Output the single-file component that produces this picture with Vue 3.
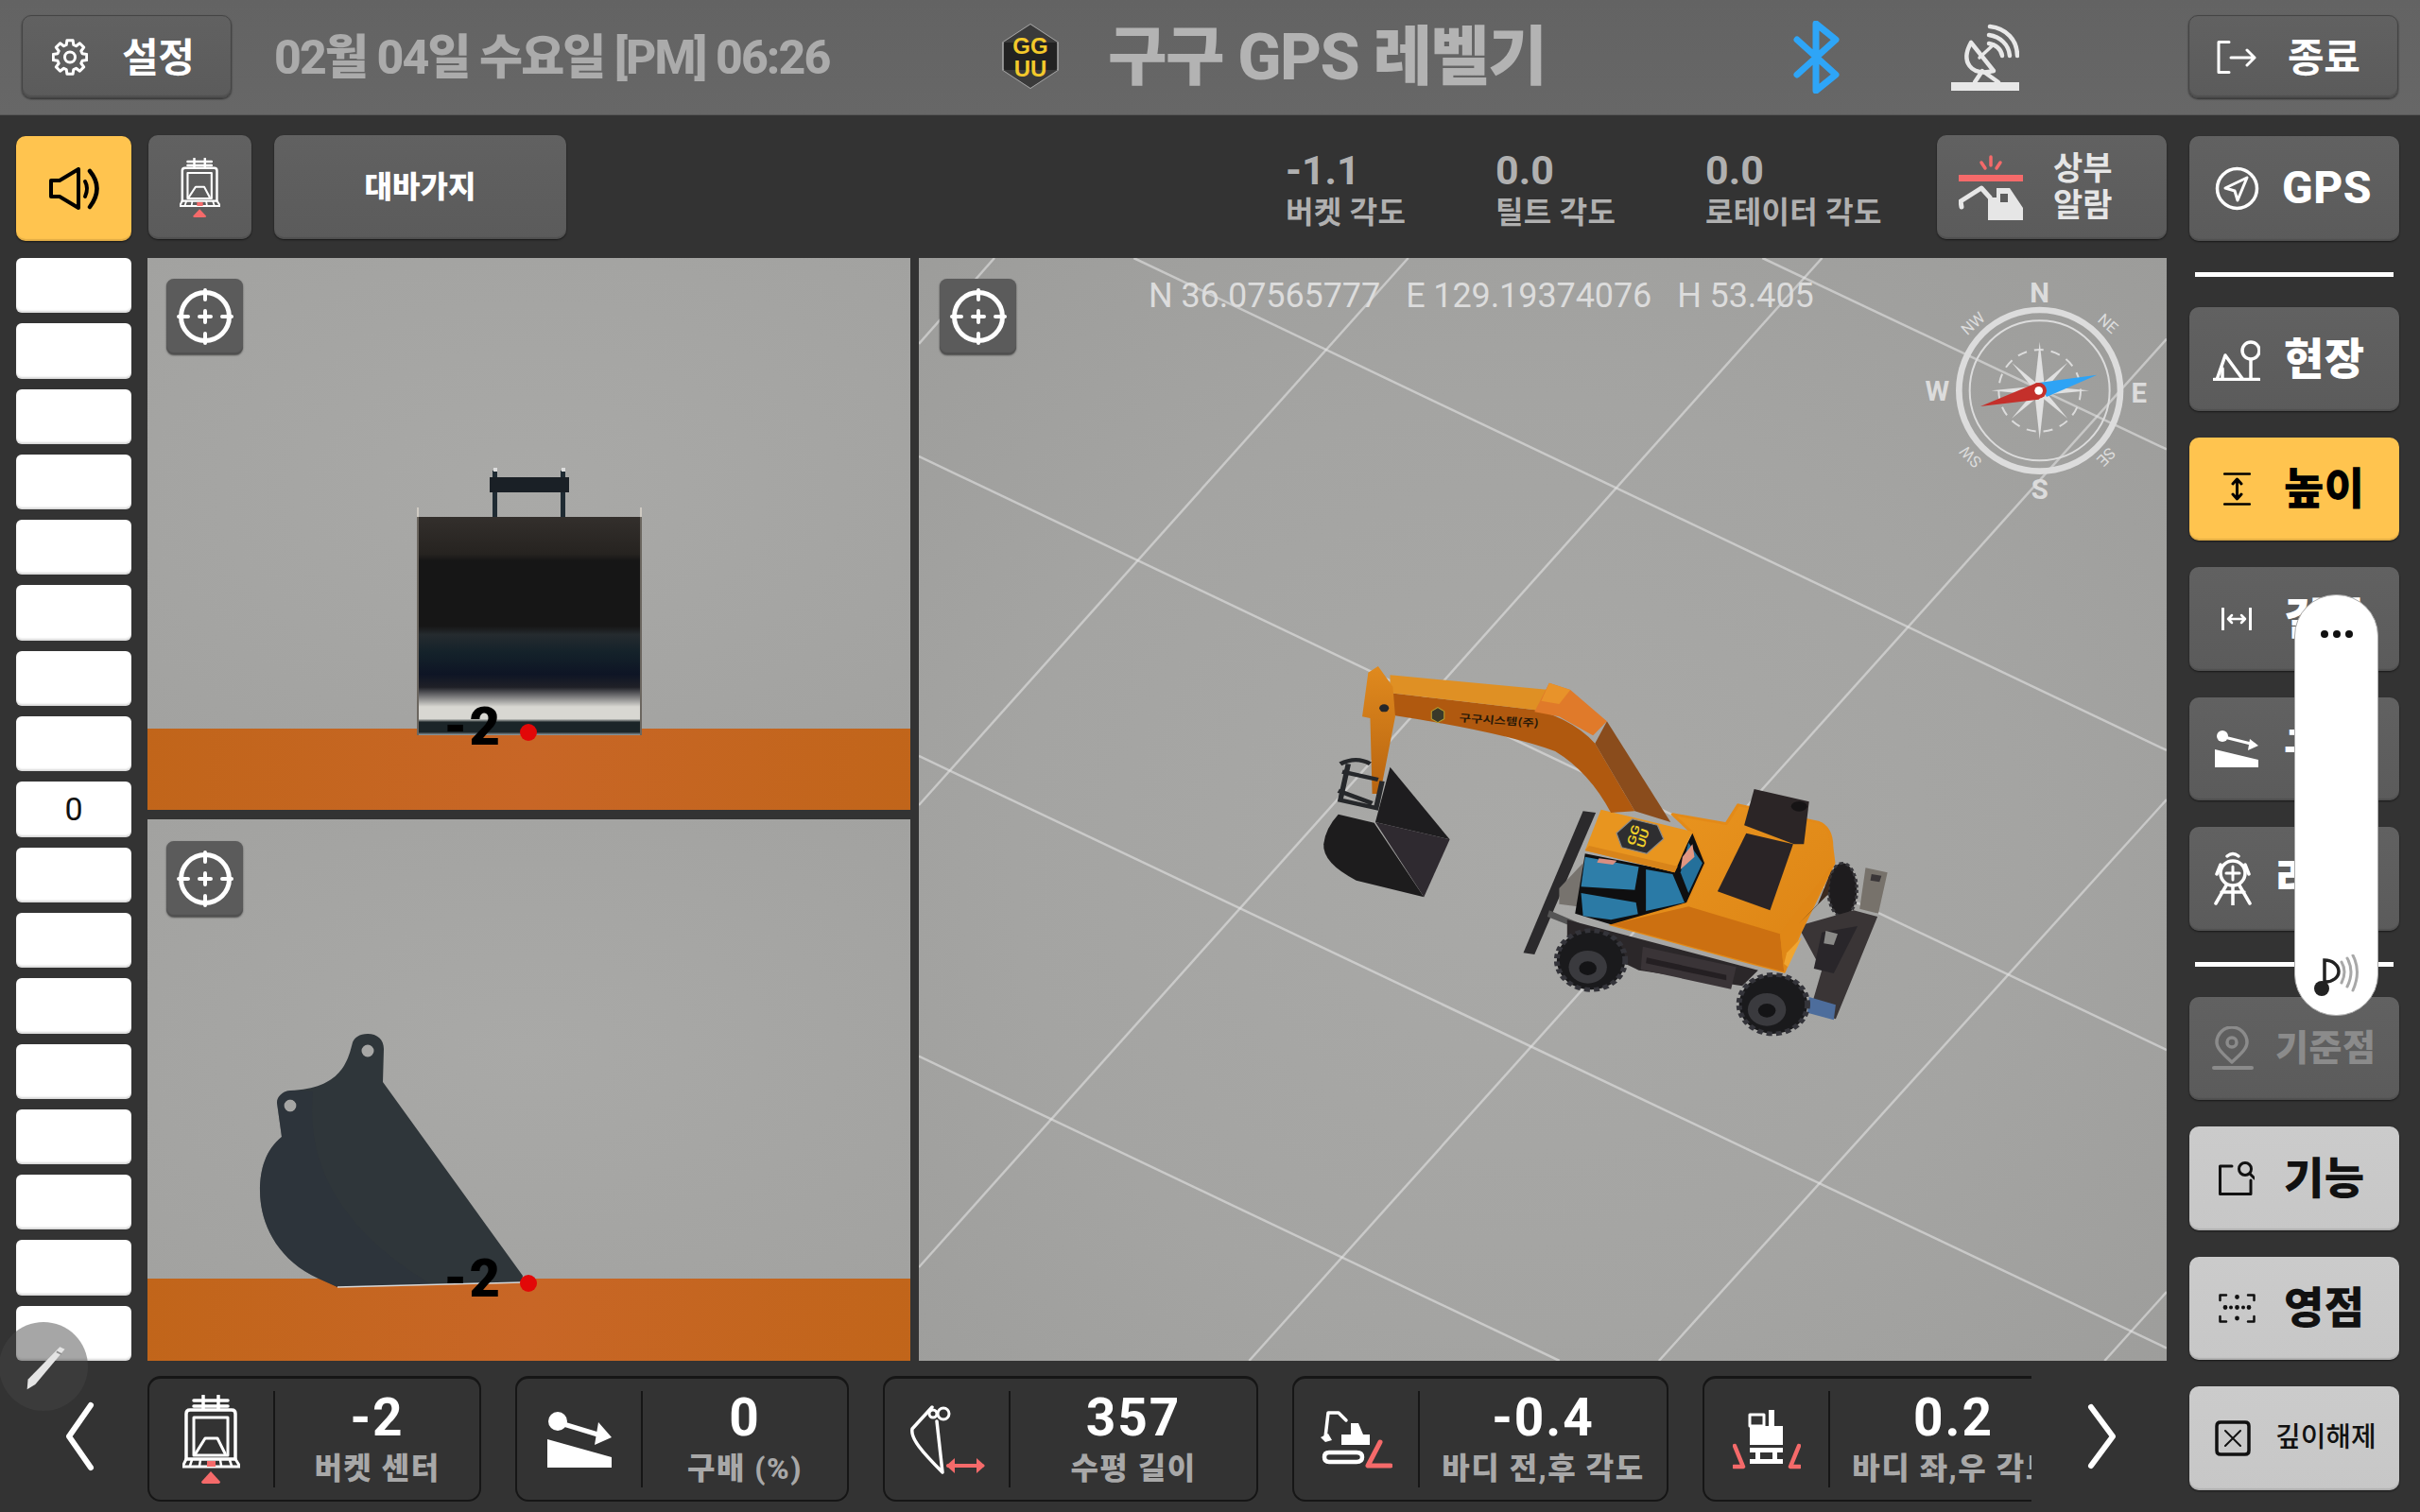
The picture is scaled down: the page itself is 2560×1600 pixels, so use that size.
<script setup>
import { h } from 'vue'

const RED = '#f56a6a'
const S = (d, w = 3, color = 'currentColor') => ({
  d, stroke: color, 'stroke-width': w, fill: 'none', 'stroke-linecap': 'round', 'stroke-linejoin': 'round'
})
const F = (d, fill = 'currentColor') => ({ d, fill })
const C = (x, y, r) => `M${x - r},${y}a${r},${r} 0 1,0 ${2 * r},0a${r},${r} 0 1,0 ${-2 * r},0Z`

function gearPath(cx, cy, R, r, n) {
  let d = ''
  for (let i = 0; i < n; i++) {
    const step = (Math.PI * 2) / n
    const a = i * step - Math.PI / 2
    const pt = (ang, rad) => `${(cx + Math.cos(ang) * rad).toFixed(1)},${(cy + Math.sin(ang) * rad).toFixed(1)}`
    d += (i ? 'L' : 'M') + pt(a - step * 0.22, R) + 'L' + pt(a + step * 0.22, R) + 'L' + pt(a + step * 0.36, r) + 'L' + pt(a + step * 0.64, r)
  }
  return d + 'Z'
}

const bucket = [
  S('M22,1V15M38,1V15', 3.5),
  S('M12,6H48M12,12H48', 3.5),
  S('M8,16H52Q56,16 56,20V68H4V20Q4,16 8,16Z', 3.5),
  S('M12,24H48V64H12Z', 3),
  S('M14,62L24,46H37L45,62', 3),
  S('M4,68L0,76H61L56,68', 3),
  S('M10,69L8,75M19,69L18,75M40,69L41,75M50,69L52,75', 2.5),
  F('M26,70H35V76H26Z', RED),
  F('M30,81L40,92Q40,94 37,94H23Q20,94 20,92Z', RED)
]

const icons = {
  gear: { w: 38, h: 39, p: [S(gearPath(19, 19.5, 18, 13.5, 8), 3), S(C(19, 19.5, 5.5), 3)] },
  exit: { w: 42, h: 35, p: [S('M13,1.5H2V33.5H13', 3), S('M15,18H40M32,10L40,18L32,26', 3)] },
  bt: { w: 55, h: 77, p: [S('M7,20L48,57L27,74V3L48,20L7,57', 7)] },
  dish: {
    w: 72, h: 71,
    p: [
      F('M0,62H72V71H0Z'),
      S('M21,20C10,40 20,56 45,50Z', 4.5),
      S('M41,3C58,5 70,17 70,34', 4.5),
      S('M40,12C52,14 61,22 62,34', 4.5),
      S('M40,21C47,22 53,27 54,34', 4.5),
      S('M30,36L45,22', 3.5),
      S('M33,50L25,62M36,52L50,62', 4.5)
    ]
  },
  speaker: { w: 53, h: 45, p: [S('M2,14H11L31,2V43L11,31H2Z', 4), S('M38,15Q42,22 38,31', 4), S('M43,4Q58,22 43,42', 4.5)] },
  bucket: { w: 61, h: 94, p: bucket },
  alarm: {
    w: 68, h: 69,
    p: [
      F('M0,21H68V28H0Z', RED),
      S('M34,2V11M24,8L28,14M44,8L40,14', 3.5, RED),
      S('M3,55L2,49L24,35L33,45', 5),
      F('M31,69V45H40V35H54L68,56V69Z'),
      F('M44,41H52V50H44Z', '#5c5c5c')
    ]
  },
  gps: { w: 47, h: 47, p: [S(C(23.5, 23.5, 21), 3.5), S('M34,12L11,23L21,26L24,36Z', 3)] },
  site: { w: 50, h: 46, p: [S('M1,44.5H49', 3.5), S('M4,45L13,19L32,45', 3.5), S('M10,33V45', 3.5), S(C(40, 14, 9), 3.5), S('M40,24V45', 3.5)] },
  height: { w: 29, h: 35, p: [S('M1,1.5H28M1,33.5H28', 2.5), S('M14.5,8V27M10,12L14.5,7L19,12M10,23L14.5,28L19,23', 3)] },
  length: { w: 32, h: 24, p: [S('M1.5,1V23M30.5,1V23', 3), S('M7,12H25M11,8L7,12L11,16M21,8L25,12L21,16', 2.5)] },
  slope: { w: 46, h: 39, p: [F(C(8, 6, 6)), S('M10,7L42,15', 3), F('M37,9L46,16L35,21Z'), F('M0,20L46,31V39H0Z')] },
  radar: {
    w: 40, h: 57,
    p: [
      S(C(20, 23, 13), 3.5), S('M20,16V30M13,23H27', 3), S('M14,5Q20,0 26,5M7,14L3,24M33,14L37,24', 3.5),
      S('M13,36L2,55M27,36L38,55M20,37V57M8,43H32', 3.5)
    ]
  },
  pin: { w: 44, h: 46, p: [S('M21,38C10,28 5,23 5,17A16,16 0 0,1 37,17C37,23 32,28 21,38Z', 3.5), S(C(21, 17, 5), 3.5), S('M2,44H42', 4)] },
  func: { w: 38, h: 36, p: [S('M14,5H1.5V34.5H34V20', 3), S(C(28, 8, 6.5), 3), S('M33,13L38,18', 3)] },
  zero: {
    w: 39, h: 31,
    p: [
      S('M1.5,7V1.5H8M31,1.5H37.5V7M37.5,24V29.5H31M8,29.5H1.5V24', 2.5),
      F(C(19.5, 3.5, 2.4) + C(7, 14.5, 2.4) + C(13, 14.5, 2) + C(19.5, 14.5, 2.4) + C(26, 14.5, 2) + C(32, 14.5, 2.4) + C(19.5, 26, 2.4))
    ]
  },
  clear: { w: 38, h: 38, p: [S('M6,2H32Q36,2 36,6V32Q36,36 32,36H6Q2,36 2,32V6Q2,2 6,2Z', 3.5), S('M11,11L27,27M27,11L11,27', 2)] },
  hlen: {
    w: 82, h: 74,
    p: [
      S('M25,3L4,26C2,36 14,50 36,72L30,18', 3.5),
      S(C(37, 10, 6) + C(26, 10, 4), 3),
      S('M42,65H78', 4, RED),
      F('M40,65L49,57V73ZM81,65L72,57V73Z', RED)
    ]
  },
  slopeBig: { w: 68, h: 59, p: [F(C(11, 10, 10)), S('M14,12L60,26', 5), F('M54,11L68,27L50,35Z'), F('M0,29L68,48V59H0Z')] },
  pitch: {
    w: 76, h: 61,
    p: [
      S('M5,28L8,2L19,2L27,10', 3.5), F('M0,28L8,24L12,31L5,33Z'),
      F('M22,25H32V13H40L45,25H52V36H22Z'),
      S('M9,44H38Q44,44 44,49Q44,54 38,54H9Q4,54 4,49Q4,44 9,44Z', 4.5),
      S('M63,33L50,58H74', 5, RED)
    ]
  },
  roll: {
    w: 72, h: 63,
    p: [
      S('M18,5H33V17H18Z', 3), F('M38,0H44V17H38Z'), F('M18,17H53V37H18Z'),
      F('M18,40H53V45H18ZM24,45H29V52H24ZM42,45H47V52H42ZM18,52H53V57H18Z'),
      S('M2,38L11,60H1', 4.5, RED), S('M70,38L61,60H71', 4.5, RED)
    ]
  }
}

const Ic = (props) => {
  const i = icons[props.name]
  return h('svg', {
    viewBox: `0 0 ${i.w} ${i.h}`,
    width: props.w || i.w,
    height: props.h || i.h,
    preserveAspectRatio: 'none'
  }, i.p.map((p) => h('path', p)))
}
Ic.props = ['name', 'w', 'h']

const Crosshair = () => h('svg', { viewBox: '0 0 60 60', width: 60, height: 60 }, [
  h('path', S(C(30, 30, 25.5), 5)),
  h('path', S('M30,2V12M30,48V58M2,30H12M48,30H58', 4)),
  h('path', S('M30,24V36M24,30H36', 4))
])

const stats = [
  { v: '-1.1', l: '버켓 각도' },
  { v: '0.0', l: '틸트 각도' },
  { v: '0.0', l: '로테이터 각도' }
]
const strip = Array.from({ length: 17 }, (_, i) => (i === 8 ? '0' : ''))

const navTop = [
  { t: '현장', i: 'site' },
  { t: '높이', i: 'height', active: true },
  { t: '길이', i: 'length' },
  { t: '구배', i: 'slope' },
  { t: '라인', i: 'radar', tight: true }
]
const navBottom = [
  { t: '기준점', i: 'pin', off: true, tight: true },
  { t: '기능', i: 'func', light: true },
  { t: '영점', i: 'zero', light: true },
  { t: '깊이해제', i: 'clear', light: true, small: true, tight: true }
]
const cards = [
  { i: 'bucket', v: '-2', l: '버켓 센터', w: 353 },
  { i: 'slopeBig', v: '0', l: '구배 (%)', w: 353 },
  { i: 'hlen', v: '357', l: '수평 길이', w: 397 },
  { i: 'pitch', v: '-0.4', l: '바디 전,후 각도', w: 398 },
  { i: 'roll', v: '0.2', l: '바디 좌,우 각도', w: 398 }
]
const gridLines = [
  'M270,0L1568,700', 'M0,282L1568,1126', 'M0,708L1568,1550', 'M0,1135L805,1568', 'M1060,0L1568,272',
  'M95,0L0,122', 'M615,0L0,778', 'M1135,0L0,1435', 'M1568,115L415,1568', 'M1568,770L930,1568', 'M1568,1470L1490,1568'
]
</script>

<template>
  <div class="app">
    <header class="top">
      <button class="btn head-btn">
        <Ic name="gear" />
        <span>설정</span>
      </button>
      <div class="date">02월 04일 수요일 [PM] 06:26</div>
      <svg class="logo" viewBox="0 0 60 69" width="60" height="69">
        <path d="M30,1L59,20V49L30,68L1,49V20Z" fill="#222" stroke="#aaa" stroke-width="1.5" />
        <path d="M30,1L59,20H1Z" fill="#3a3a3a" />
        <path d="M1,49H59L30,68Z" fill="#3a3a3a" />
        <text class="logo-t" x="30" y="32">GG</text>
        <text class="logo-t" x="30" y="56">UU</text>
      </svg>
      <div class="title">구구 GPS 레벨기</div>
      <Ic name="bt" class="bt" />
      <Ic name="dish" class="dish" />
      <button class="btn head-btn exit">
        <Ic name="exit" />
        <span>종료</span>
      </button>
    </header>

    <div class="main">
      <div class="content">
        <div class="toolbar">
          <button class="btn sound"><Ic name="speaker" /></button>
          <button class="btn bucket-btn"><Ic name="bucket" :w="43" :h="63" /></button>
          <button class="btn type-btn">대바가지</button>
          <div class="stats">
            <div v-for="s in stats" :key="s.l" class="stat">
              <div class="stat-v">{{ s.v }}</div>
              <div class="stat-l">{{ s.l }}</div>
            </div>
          </div>
          <button class="btn alarm-btn">
            <Ic name="alarm" />
            <span>상부<br />알람</span>
          </button>
        </div>

        <div class="mid">
          <div class="strip">
            <div v-for="(s, i) in strip" :key="i" class="cell">{{ s }}</div>
          </div>
          <div class="views">
            <div class="view front">
              <div class="sky"></div>
              <div class="ground g1"></div>
              <svg class="layer" viewBox="0 0 807 584">
                <defs>
                  <linearGradient id="bk" x1="0" y1="0" x2="0" y2="1">
                    <stop offset="0" stop-color="#332f2c" />
                    <stop offset="0.17" stop-color="#262320" />
                    <stop offset="0.2" stop-color="#161616" />
                    <stop offset="0.5" stop-color="#161616" />
                    <stop offset="0.54" stop-color="#252b2f" />
                    <stop offset="0.62" stop-color="#14222a" />
                    <stop offset="0.72" stop-color="#0e1525" />
                    <stop offset="0.78" stop-color="#1f2027" />
                    <stop offset="0.87" stop-color="#d8d7d2" />
                    <stop offset="0.925" stop-color="#d8d7d2" />
                    <stop offset="0.94" stop-color="#1b2528" />
                    <stop offset="0.985" stop-color="#1b2528" />
                    <stop offset="1" stop-color="#9aa3a6" />
                  </linearGradient>
                </defs>
                <path d="M365,274V225H370V274ZM437,274V225H442V274Z" fill="#1f2b33" />
                <path d="M366,222H370V226H366ZM438,222H442V226H438Z" fill="#ddd" />
                <path d="M362,232H446V248H362Z" fill="#1a2026" />
                <path d="M285,274H522V505H285Z" fill="url(#bk)" />
                <path d="M285,274H287V505H285ZM521,274H523V505H521Z" fill="#6b665f" />
                <path d="M285,264H287V274H285ZM521,264H523V274H521Z" fill="#cfcac2" />
                <circle cx="403" cy="502" r="9" fill="#e20808" />
                <text class="mark" x="375" y="515">-2</text>
              </svg>
              <button class="btn cross"><Crosshair /></button>
            </div>

            <div class="view geo">
              <svg class="layer grid" viewBox="0 0 1568 1568" preserveAspectRatio="none">
                <path v-for="(d, i) in gridLines" :key="i" :d="d" stroke="#e6e6e6" stroke-opacity="0.58" stroke-width="2.5" vector-effect="non-scaling-stroke" />
              </svg>

              <svg class="excavator" viewBox="0 0 1568 1320" preserveAspectRatio="none">
                <defs>
                  <linearGradient id="bd" x1="0" y1="0" x2="1" y2="1">
                    <stop offset="0" stop-color="#ea9620" />
                    <stop offset="1" stop-color="#dc8314" />
                  </linearGradient>
                  <linearGradient id="stk" x1="0" y1="0" x2="0" y2="1">
                    <stop offset="0" stop-color="#e08a1e" />
                    <stop offset="1" stop-color="#b86410" />
                  </linearGradient>
                </defs>
                <!-- rear wheel and blade -->
                <ellipse cx="1352" cy="785" rx="36" ry="85" fill="#1e1c1e" stroke="#37363a" stroke-width="8" stroke-dasharray="10 8" />
                <path d="M1410,715L1465,730L1442,860L1395,845Z" fill="#77726b" />
                <path d="M1425,735L1450,740L1445,760L1422,755Z" fill="#3a3638" />
                <path d="M1240,900L1380,850L1440,870L1335,1195L1270,1170L1300,1040Z" fill="#3a3536" />
                <path d="M1300,920L1390,900L1330,1050L1280,1035Z" fill="#29262a" />
                <path d="M1310,915L1340,925L1330,960L1305,955Z" fill="#8a8a88" />
                <path d="M1268,1125L1335,1150L1330,1198L1264,1175Z" fill="#4d6d9c" />
                <!-- front blade -->
                <path d="M700,535L732,540L578,990L550,985Z" fill="#2b2a2c" />
                <path d="M640,780L700,700L700,840L640,830Z" fill="#77736e" />
                <path d="M615,850L690,890L690,910L610,870Z" fill="#555" />
                <!-- chassis -->
                <path d="M660,880L1140,1040L1100,1090L840,1040L660,930Z" fill="#2b2729" />
                <path d="M850,965L1085,1030L1072,1100L845,1038Z" fill="#3a3437" />
                <path d="M860,1000L1060,1055L1060,1072L858,1018Z" fill="#241f22" />
                <!-- wheels -->
                <g>
                  <ellipse cx="720" cy="1008" rx="86" ry="94" fill="#1a1a1c" stroke="#34343a" stroke-width="14" stroke-dasharray="14 10" />
                  <ellipse cx="712" cy="1030" rx="48" ry="52" fill="#3a3a3e" />
                  <ellipse cx="712" cy="1034" rx="22" ry="22" fill="#141416" />
                  <ellipse cx="1178" cy="1148" rx="86" ry="94" fill="#1a1a1c" stroke="#34343a" stroke-width="14" stroke-dasharray="14 10" />
                  <ellipse cx="1162" cy="1165" rx="48" ry="52" fill="#3a3a3e" />
                  <ellipse cx="1162" cy="1168" rx="22" ry="22" fill="#141416" />
                </g>
                <!-- body -->
                <path d="M925,545L1060,575L1090,515L1290,570Q1325,585 1325,650L1330,700L1245,920L1205,1045L1130,1020L770,895L960,825L1005,700L975,605Z" fill="url(#bd)" stroke="#e38a18" stroke-width="8" stroke-linejoin="round" />
                <path d="M770,895L965,838L1195,925L1205,1045L1130,1020Z" fill="#cc7011" />
                <path d="M1205,1045L1195,925L1330,700L1245,920Z" fill="#e08716" />
                <path d="M1240,895L1315,800L1325,720L1290,830Z" fill="#3b2a1f" />
                <path d="M1250,935L1215,1030L1205,1020L1212,985Z" fill="#f0a530" />
                <!-- engine covers -->
                <path d="M1130,465L1268,505L1255,640L1230,640L1105,580Z" fill="#2b2526" />
                <path d="M1110,605L1228,640L1170,850L1038,790Z" fill="#2a2426" />
                <ellipse cx="1243" cy="520" rx="20" ry="16" fill="#161415" />
                <!-- cab -->
                <path d="M705,670L925,725L975,605L1005,700L960,825L770,895L680,860Z" fill="#0f0f10" />
                <path d="M705,680L840,712L830,785L695,775Z" fill="#2e7ea9" />
                <path d="M695,795L833,825L838,862L770,880L700,868Z" fill="#2b7aa5" />
                <path d="M858,720L925,735L955,825L858,852Z" fill="#2a7aa6" />
                <path d="M965,635L1000,700L965,795L945,730Z" fill="#24709b" />
                <path d="M950,680L975,640L980,680L945,720Z" fill="#e19682" />
                <path d="M740,685L785,692L775,705L735,698Z" fill="#d88f82" />
                <path d="M745,530L975,600L930,730L705,660Z" fill="#e8951f" />
                <path d="M705,660L930,730L938,710L715,645Z" fill="#d8841a" />
                <g transform="translate(842 615)">
                  <path d="M-18,-55L45,-35L60,8L18,55L-45,35L-58,-10Z" fill="#2e2e30" stroke="#8a8a8a" stroke-width="3" />
                  <text class="roof-logo" transform="scale(0.7 1) rotate(-72) translate(-2 -8)" text-anchor="middle">GG</text>
                  <text class="roof-logo" transform="scale(0.7 1) rotate(-72) translate(-2 28)" text-anchor="middle">UU</text>
                </g>
                <!-- boom -->
                <path d="M920,570L760,250L730,320L830,535Z" fill="#8a4c1c" />
                <path d="M195,190L215,160L590,215Q680,250 730,320L830,535L770,540Q715,410 630,345Q500,285 228,232Z" fill="#b0590f" />
                <path d="M215,103L615,150L590,215L215,160Z" fill="#df9024" />
                <path d="M615,128L668,150L760,250L725,295L640,235L578,220Z" fill="#e07a2a" />
                <path d="M615,128L668,150L640,195L595,185Z" fill="#e8932a" />
                <!-- stick -->
                <path d="M185,75L222,140L228,235L190,480L170,480L165,240L145,235L160,95Z" fill="url(#stk)" />
                <circle cx="200" cy="208" r="12" fill="#25272a" />
                <g transform="translate(335 230) scale(0.8 1)"><path d="M0,-24L20,-12V12L0,24L-20,12V-12Z" fill="#3a3a2a" stroke="#b8a030" stroke-width="3" /></g>
                <text class="boom-t" transform="translate(388 250) rotate(5)">구구시스템(주)</text>
                <!-- bucket -->
                <path d="M85,545L175,572L300,808L130,755Q45,700 48,640Q52,590 85,545Z" fill="#1d1c1d" />
                <path d="M178,570L215,395L365,625Z" fill="#1e1d1f" />
                <path d="M178,570L365,625L300,808Z" fill="#2f2a30" />
                <path d="M90,385Q130,360 165,385M95,410L185,435M110,385L90,500L180,525L195,440M85,470L170,510" fill="none" stroke="#26282b" stroke-width="13" />
              </svg>

              <svg class="compass" viewBox="0 9 900 810">
                <g fill="none" stroke="#dcdcdc">
                  <circle cx="533" cy="430" r="256" stroke-width="20" />
                  <circle cx="533" cy="430" r="222" stroke-width="6" />
                  <circle cx="533" cy="430" r="130" stroke-width="6" stroke-dasharray="30 24" />
                </g>
                <g fill="#e0e0e0">
                  <path d="M533,275L550,430L533,585L516,430Z" />
                  <path d="M380,430L533,415L690,430L533,445Z" />
                  <path d="M533,305L545,430L533,555L521,430Z" transform="rotate(45 533 430)" />
                  <path d="M533,305L545,430L533,555L521,430Z" transform="rotate(-45 533 430)" />
                </g>
                <path d="M530,405L715,380L555,450Z" fill="#2ea3f5" />
                <path d="M345,480L525,405L555,430L530,458Z" fill="#c4302b" />
                <circle cx="530" cy="430" r="25" fill="#c4302b" />
                <circle cx="530" cy="430" r="13" fill="#fff" />
                <text class="c-big" x="533" y="150">N</text>
                <text class="c-big" x="533" y="775">S</text>
                <text class="c-big" x="208" y="463">W</text>
                <text class="c-big" x="848" y="467">E</text>
                <text class="c-sm" transform="translate(333 230) rotate(-42)">NW</text>
                <text class="c-sm" transform="translate(738 230) rotate(42)">NE</text>
                <text class="c-sm" transform="translate(732 628) rotate(135)">SE</text>
                <text class="c-sm" transform="translate(326 628) rotate(-135)">SW</text>
              </svg>

              <div class="coords">
                <span>N 36.07565777</span><span>E 129.19374076</span><span>H 53.405</span>
              </div>
              <button class="btn cross"><Crosshair /></button>
            </div>

            <div class="view side-view">
              <div class="sky"></div>
              <div class="ground g2"></div>
              <svg class="layer" viewBox="0 0 807 573">
                <path
                  fill-rule="evenodd"
                  fill="#2f363a"
                  d="M397,483L249,278L250,243C250,233 243,227 233,227C224,227 219,231 217,236C212,256 205,285 151,287C142,288 137,294 137,300L142,336C125,350 119,370 119,393C119,425 135,465 181,486L201,495L396,490Z M239.5,245a6.5,6.5 0 1,0 -13,0a6.5,6.5 0 1,0 13,0Z M157.5,303a6.5,6.5 0 1,0 -13,0a6.5,6.5 0 1,0 13,0Z"
                />
                <path d="M175,288C170,340 180,420 300,492L201,495L181,486C135,465 119,425 119,393C119,370 125,350 142,336L137,300C137,294 142,288 151,287Z M157.5,303a6.5,6.5 0 1,0 -13,0a6.5,6.5 0 1,0 13,0Z" fill-rule="evenodd" fill="#2c323b" fill-opacity="0.5" />
                <path d="M201,495L396,490" stroke="#d8d8d8" stroke-width="1.5" />
                <circle cx="403" cy="491" r="9" fill="#e20808" />
                <text class="mark" x="375" y="505">-2</text>
              </svg>
              <button class="btn cross"><Crosshair /></button>
            </div>
          </div>
        </div>

        <div class="bottom">
          <svg class="arrow" viewBox="0 0 32 74" width="32" height="74">
            <path d="M28,4L5,37L28,70" fill="none" stroke="#fff" stroke-width="6" stroke-linecap="round" stroke-linejoin="round" />
          </svg>
          <div class="carousel">
            <div v-for="c in cards" :key="c.l" class="card" :style="{ width: c.w + 'px' }">
              <div class="card-ic"><Ic :name="c.i" /></div>
              <div class="card-tx">
                <div class="card-v">{{ c.v }}</div>
                <div class="card-l">{{ c.l }}</div>
              </div>
            </div>
          </div>
          <svg class="arrow" viewBox="0 0 32 70" width="32" height="70">
            <path d="M4,4L27,35L4,66" fill="none" stroke="#fff" stroke-width="6" stroke-linecap="round" stroke-linejoin="round" />
          </svg>
        </div>
      </div>

      <aside class="side">
        <button class="btn nav gps"><Ic name="gps" /><span class="nav-t">GPS</span></button>
        <div class="rule first"></div>
        <button v-for="n in navTop" :key="n.t" class="btn nav" :class="{ active: n.active, tight: n.tight }">
          <span class="nav-ic"><Ic :name="n.i" /></span><span class="nav-t">{{ n.t }}</span>
        </button>
        <div class="rule second"></div>
        <button v-for="n in navBottom" :key="n.t" class="btn nav" :class="{ off: n.off, light: n.light, small: n.small, tight: n.tight }">
          <span class="nav-ic"><Ic :name="n.i" /></span><span class="nav-t">{{ n.t }}</span>
        </button>
      </aside>
    </div>

    <div class="pencil">
      <svg viewBox="0 0 60 60" width="52" height="52">
        <path d="M50,6L56,9L20,52L10,58L11,46Z" fill="#e4e4e4" />
        <path d="M46,12L52,15" stroke="#8f8f8f" stroke-width="2" />
      </svg>
    </div>

    <div class="pill">
      <div class="dots"><i></i><i></i><i></i></div>
      <svg viewBox="0 0 48 44" width="48" height="44">
        <path d="M11,35V6C20,6 26,12 26,18C26,24 20,29 12,29" fill="none" stroke="#222" stroke-width="3.5" />
        <circle cx="8" cy="36" r="8" fill="#222" />
        <path d="M29,8Q35,18 29,30M35,4Q43,18 35,34M41,1Q50,18 41,38" fill="none" stroke="#a8a8a8" stroke-width="3" stroke-linecap="round" />
      </svg>
    </div>
  </div>
</template>

<style>
html, body { margin: 0; background: #333; }
</style>

<style scoped>
.app {
  position: relative;
  width: 2560px;
  height: 1600px;
  overflow: hidden;
  display: flex;
  flex-direction: column;
  background: #333;
  color: #fff;
  font-family: Roboto, "Noto Sans CJK KR", sans-serif;
}
button { font-family: inherit; border: 0; padding: 0; color: inherit; }
.btn {
  display: flex;
  align-items: center;
  justify-content: center;
  background: linear-gradient(#616161, #5b5b5b);
  border-radius: 10px;
  box-shadow: inset 0 -2px 1px rgba(0, 0, 0, 0.12), 0 1px 2px rgba(0, 0, 0, 0.55);
  flex: none;
}

/* header */
.top {
  flex: none;
  height: 122px;
  box-sizing: border-box;
  padding: 0 23px;
  display: flex;
  align-items: center;
  background: linear-gradient(#636363, #676767);
  border-bottom: 1px solid #585858;
}
.head-btn {
  width: 222px;
  height: 88px;
  gap: 36px;
  font-size: 42px;
  font-weight: 700;
  border: 1px solid #444;
  box-sizing: border-box;
  justify-content: flex-start;
  padding-left: 31px;
  margin-top: -1px;
}
.head-btn span { margin-top: -5px; letter-spacing: -0.5px; }
.date {
  margin-left: 45px;
  margin-top: -10px;
  width: 770px;
  flex: none;
  font-size: 50px;
  font-weight: 800;
  color: #ababab;
  letter-spacing: -1.9px;
  white-space: nowrap;
}
.logo { flex: none; margin-top: -2px; }
.logo-t { font-family: "Liberation Sans", sans-serif; font-weight: 700; font-size: 24px; fill: #f3c92b; text-anchor: middle; }
.title {
  margin-left: 52px;
  margin-top: -12px;
  width: 722px;
  flex: none;
  font-size: 68px;
  font-weight: 800;
  color: #b3b3b3;
  white-space: nowrap;
  letter-spacing: -1.6px;
}
.bt { color: #2ea5f7; flex: none; }
.dish { color: #e8e8e8; margin-left: 115px; flex: none; }
.exit { margin-left: auto; gap: 33px; padding-left: 29px; }

/* main */
.main { flex: 1; display: flex; min-height: 0; }
.content { width: 2292px; flex: none; display: flex; flex-direction: column; }
.toolbar { height: 151px; flex: none; display: flex; align-items: flex-start; padding: 21px 0 0 17px; box-sizing: border-box; }
.sound { width: 122px; height: 111px; background: #ffc44f; color: #000; margin-top: 1px; }
.bucket-btn { width: 109px; height: 110px; margin-left: 18px; }
.type-btn { width: 309px; height: 110px; margin-left: 24px; padding-bottom: 6px; box-sizing: border-box; font-size: 32px; font-weight: 800; }
.stats { display: flex; margin-left: 761px; padding-top: 15px; }
.stat { width: 222px; color: #b0b0b0; }
.stat-v { font-size: 43px; line-height: 44px; font-weight: 700; }
.stat-l { font-size: 32px; line-height: 44px; font-weight: 700; white-space: nowrap; margin-top: 1px; letter-spacing: 0.3px; }
.alarm-btn { width: 243px; height: 110px; margin-left: auto; gap: 32px; font-size: 34px; line-height: 39px; font-weight: 700; color: #e6e6e6; justify-content: flex-start; padding-left: 23px; box-sizing: border-box; }

.mid { height: 1167px; flex: none; display: flex; padding-left: 17px; gap: 17px; }
.strip { width: 122px; display: grid; grid-template-rows: repeat(17, 1fr); gap: 11px; }
.cell {
  background: #fff;
  border-radius: 6px;
  color: #111;
  font-size: 34px;
  display: flex;
  align-items: center;
  justify-content: center;
  box-shadow: inset 0 -2px 2px rgba(0, 0, 0, 0.15);
}
.views { flex: 1; display: grid; grid-template-columns: 807px 1320px; grid-template-rows: 584px 573px; gap: 10px 9px; }
.view { position: relative; display: flex; flex-direction: column; background: #a5a5a3; overflow: hidden; }
.front { grid-column: 1; grid-row: 1; }
.side-view { grid-column: 1; grid-row: 2; }
.geo {
  grid-column: 2;
  grid-row: 1 / span 2;
  background: radial-gradient(ellipse at 48% 55%, #a9a9a7 0%, #a4a4a2 55%, #9c9c9a 100%);
}
.sky { flex: 1; background: radial-gradient(ellipse at center, #a9a9a7, #a2a2a0); }
.ground { flex: none; background: linear-gradient(95deg, #c1651a, #c86626 50%, #c1651a); }
.g1 { height: 86px; }
.g2 { height: 87px; }
.layer { position: absolute; inset: 0; width: 100%; height: 100%; }
.mark { font-family: Roboto, sans-serif; font-weight: 900; font-size: 56px; letter-spacing: 2px; fill: #000; text-anchor: end; }
.cross {
  position: absolute;
  left: 20px;
  top: 22px;
  width: 81px;
  height: 80px;
  background: #5b5b5b;
  border-radius: 8px;
  color: #fff;
}
.side-view .cross { top: 23px; }
.geo .cross { left: 22px; }
.coords {
  position: absolute;
  left: 243px;
  top: 19px;
  display: flex;
  gap: 27px;
  font-size: 36px;
  line-height: 42px;
  letter-spacing: -0.1px;
  color: #dcdcdc;
  white-space: nowrap;
}
.compass { position: absolute; left: 1008px; top: 0; width: 300px; height: 270px; }
.c-big { font-family: Roboto, sans-serif; font-weight: 700; font-size: 88px; fill: #dcdcdc; text-anchor: middle; }
.c-sm { font-family: Roboto, sans-serif; font-size: 50px; fill: #dcdcdc; text-anchor: middle; }
.excavator { position: absolute; left: 408px; top: 407px; width: 660px; height: 440px; }
.roof-logo { font-family: "Liberation Sans", sans-serif; font-weight: 700; font-size: 42px; fill: #f0d02a; }
.boom-t { font-family: "Noto Sans CJK KR", sans-serif; font-weight: 700; font-size: 32px; fill: #2a1a08; }

/* bottom */
.bottom { flex: 1; display: flex; align-items: center; }
.arrow { flex: none; }
.bottom .arrow:first-child { margin-left: 68px; margin-right: 56px; }
.bottom .arrow:last-child { margin-left: 59px; }
.carousel { width: 1993px; flex: none; display: flex; gap: 36px; overflow: hidden; margin-top: 5px; }
.card {
  flex: none;
  height: 133px;
  box-sizing: border-box;
  display: flex;
  border: 2px solid #161616;
  border-top-width: 3px;
  border-radius: 14px;
  background: #333;
  color: #fff;
}
.card-ic { width: 131px; flex: none; height: 100%; display: flex; align-items: center; justify-content: center; }
.card-tx { flex: 1; min-width: 0; margin: 13px 0; border-left: 2px solid #161616; display: flex; flex-direction: column; align-items: center; }
.card-v { font-size: 55px; font-weight: 700; line-height: 50px; margin-top: 3px; letter-spacing: 2px; }
.card-l { font-size: 32px; font-weight: 800; line-height: 40px; margin-top: 9px; letter-spacing: 1.5px; color: #a8a8a8; white-space: nowrap; }

/* side */
.side { flex: 1; display: flex; flex-direction: column; gap: 28px; padding: 22px 22px 0 24px; box-sizing: border-box; min-width: 0; }
.nav {
  height: 109.5px;
  width: 222px;
  justify-content: flex-start;
  font-size: 46px;
  font-weight: 800;
  letter-spacing: 0.5px;
}
.nav-t { margin-top: -8px; }
.nav-ic { width: 100px; display: flex; justify-content: center; align-items: center; flex: none; padding-right: 0; }
.nav.tight .nav-ic { width: 91px; }
.gps { height: 111px; gap: 24px; padding-left: 27px; box-sizing: border-box; font-size: 48px; }
.gps .nav-t { margin-top: -2px; }
.rule { height: 5px; background: #fff; width: 210px; flex: none; margin: 5px 0 4px 6px; }
.rule.second { margin: 5.5px 0 3.5px 6px; }
.active { background: #ffc44f; color: #000; }
.off { color: #8b8b8b; font-size: 38px; }
.light { background: linear-gradient(#cbcbcb, #c7c7c7); color: #111; }
.small { font-size: 29px; font-weight: 500; letter-spacing: 0; }

/* overlays */
.pencil {
  position: absolute;
  left: -1px;
  top: 1399px;
  width: 94px;
  height: 94px;
  border-radius: 50%;
  background: rgba(70, 70, 70, 0.48);
  display: flex;
  align-items: center;
  justify-content: center;
}
.pill {
  position: absolute;
  left: 2427px;
  top: 629px;
  width: 89px;
  height: 446px;
  box-sizing: border-box;
  background: #fff;
  border: 1px solid #aaa;
  border-radius: 44px;
  display: flex;
  flex-direction: column;
  align-items: center;
  justify-content: space-between;
  padding: 37px 0 20px;
}
.dots { display: flex; gap: 5px; }
.dots i { display: block; width: 8px; height: 8px; border-radius: 50%; background: #111; }
</style>
